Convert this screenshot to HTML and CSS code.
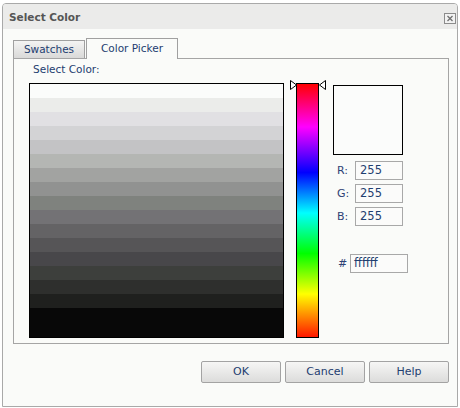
FILE: index.html
```html
<!DOCTYPE html>
<html>
<head>
<meta charset="utf-8">
<link rel="stylesheet" href="styles.css">
</head>
<body>
<div class="dialog">
  <div class="titlebar">
    <span class="title">Select Color</span>
    <span class="close">
      <svg width="12" height="11" viewBox="0 0 12 11"><rect x="0.5" y="0.5" width="11" height="10" fill="#f2f2f2" stroke="#8c8c8c"/><path d="M3.5 3 L8.5 8 M8.5 3 L3.5 8" stroke="#707070" stroke-width="1.3"/></svg>
    </span>
  </div>
  <div class="body">
    <div class="tabs">
      <div class="tab">Swatches</div>
      <div class="tab active">Color Picker</div>
    </div>
    <div class="panel">
      <div class="caption">Select Color:</div>
      <div class="picker">
        <div class="shades"></div>
        <div class="hue">
          <svg class="arrow left" width="8" height="10" viewBox="0 0 8 10"><polygon points="0.5,0.5 6.5,5 0.5,9.5" fill="#fff" stroke="#000"/></svg>
          <svg class="arrow right" width="8" height="10" viewBox="0 0 8 10"><polygon points="7.5,0.5 1.5,5 7.5,9.5" fill="#fff" stroke="#000"/></svg>
        </div>
        <div class="values">
          <div class="preview"></div>
          <div class="row"><span class="lbl">R:</span><span class="input">255</span></div>
          <div class="row"><span class="lbl">G:</span><span class="input">255</span></div>
          <div class="row"><span class="lbl">B:</span><span class="input">255</span></div>
          <div class="row hex"><span class="lbl">#</span><span class="input wide">ffffff</span></div>
        </div>
      </div>
    </div>
    <div class="footer">
      <div class="btn">OK</div>
      <div class="btn">Cancel</div>
      <div class="btn">Help</div>
    </div>
  </div>
</div>
</body>
</html>
```

FILE: styles.css
```css
html, body {
  margin: 0;
  padding: 0;
  background: #ffffff;
}
body {
  font-family: "DejaVu Sans", Verdana, sans-serif;
  font-size: 10.5px;
  color: #233d70;
}
.dialog {
  box-sizing: border-box;
  margin: 3px 0 0 2px;
  width: 456px;
  height: 404px;
  border: 1px solid #a9a9a9;
  border-radius: 4px 4px 0 0;
  background: #fafbf9;
  overflow: hidden;
}
.titlebar {
  height: 25px;
  background: #ebebea;
  display: flex;
  align-items: center;
  justify-content: space-between;
  padding: 0 1px 0 6px;
}
.title {
  font-weight: bold;
  color: #555555;
  line-height: 14px;
  margin-top: 1px;
}
.close {
  width: 12px;
  height: 11px;
  margin-top: 3px;
  display: block;
}
.close svg { display: block; }
.body {
  padding: 9px 8px 0 10px;
}
.tabs {
  display: flex;
  align-items: flex-end;
  gap: 1px;
  height: 20px;
}
.tab {
  box-sizing: border-box;
  width: 72px;
  height: 18px;
  border: 1px solid #a0a0a0;
  border-bottom: none;
  background: linear-gradient(#f4f4f3, #d9d9d8);
  text-align: center;
  line-height: 17px;
}
.tab.active {
  width: 92px;
  height: 21px;
  background: #fafbf9;
  margin-bottom: -1px;
  position: relative;
  line-height: 19px;
}
.panel {
  box-sizing: border-box;
  width: 436px;
  height: 286px;
  border: 1px solid #a5a5a5;
  padding: 4px 0 0 15px;
}
.caption {
  line-height: 13px;
  padding-left: 4px;
}
.picker {
  display: flex;
  margin-top: 7px;
}
.shades {
  box-sizing: border-box;
  width: 255px;
  height: 255px;
  border: 1px solid #000;
  background: linear-gradient(to bottom,
    #fbfcfb 0px, #fbfcfb 14px,
    #ebecea 14px, #ebecea 28px,
    #e1e0e3 28px, #e1e0e3 42px,
    #d3d3d5 42px, #d3d3d5 56px,
    #c3c3c5 56px, #c3c3c5 70px,
    #b4b6b3 70px, #b4b6b3 84px,
    #a2a3a1 84px, #a2a3a1 98px,
    #919291 98px, #919291 112px,
    #7f827e 112px, #7f827e 126px,
    #737275 126px, #737275 140px,
    #646365 140px, #646365 154px,
    #565557 154px, #565557 168px,
    #48474a 168px, #48474a 182px,
    #3d3f3c 182px, #3d3f3c 196px,
    #2e2f2d 196px, #2e2f2d 210px,
    #1f201e 210px, #1f201e 224px,
    #080808 224px, #080808 253px);
}
.hue {
  position: relative;
  box-sizing: border-box;
  width: 23px;
  height: 255px;
  margin-left: 12px;
  border: 1px solid #000;
  background: linear-gradient(to bottom,
    #ff0000 0%, #ff00ff 17%, #0000ff 35%, #00ffff 51%,
    #00ff00 67%, #ffff00 83%, #ff1800 100%);
}
.arrow {
  position: absolute;
  top: -4px;
  display: block;
}
.arrow.left { left: -7px; }
.arrow.right { right: -8px; }
.values {
  margin-left: 14px;
  width: 80px;
}
.preview {
  box-sizing: border-box;
  width: 70px;
  height: 70px;
  margin-top: 2px;
  border: 1px solid #000;
  background: #fbfcfb;
  margin-bottom: 6px;
}
.row {
  display: flex;
  align-items: center;
  width: 70px;
  height: 19px;
  margin-bottom: 4px;
}
.lbl {
  padding-left: 4px;
  color: #2e4276;
  font-size: 11px;
}
.input {
  box-sizing: border-box;
  margin-left: auto;
  width: 48px;
  height: 19px;
  border: 1px solid #a8a8a8;
  background: #fbfbfa;
  padding-left: 4px;
  line-height: 17px;
  font-size: 11.5px;
  color: #1f3f70;
}
.row.hex {
  margin-top: 28px;
  width: 75px;
}
.lbl + .input.wide {
  width: 58px;
  padding-left: 3px;
}
.hex .lbl { padding-left: 5px; }
.footer {
  display: flex;
  justify-content: flex-end;
  gap: 4px;
  margin-top: 17px;
}
.btn {
  box-sizing: border-box;
  width: 80px;
  height: 22px;
  border: 1px solid #a3a3a3;
  border-radius: 2px;
  background: linear-gradient(#f6f6f5, #e9e9e8 50%, #dcdcdb);
  text-align: center;
  line-height: 20px;
  font-size: 11px;
  color: #233d70;
}
```
